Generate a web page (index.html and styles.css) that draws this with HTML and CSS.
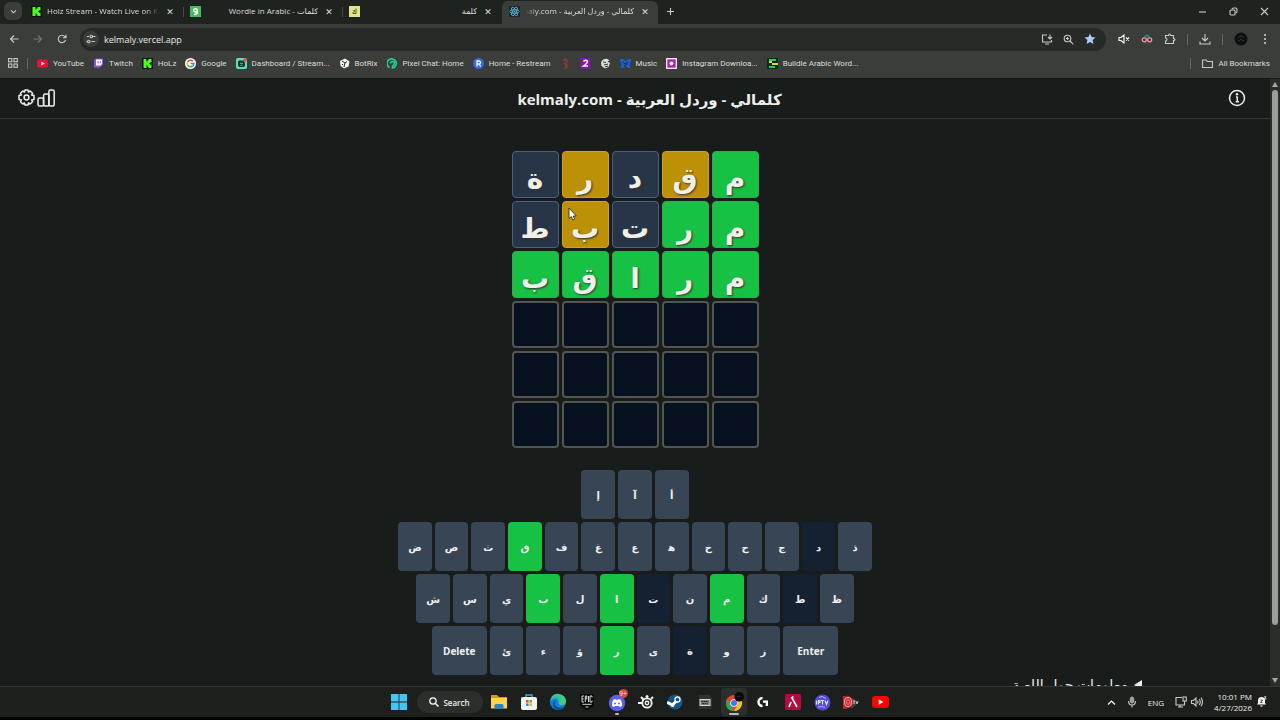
FILE: index.html
```html
<!DOCTYPE html>
<html lang="ar">
<head>
<meta charset="utf-8">
<title>كلمالي - وردل العربية</title>
<link rel="stylesheet" href="styles.css">
</head>
<body>
<header class="browser">
  <div class="tabstrip">
    <button class="tab-search" aria-label="Search tabs"><svg width="9" height="9" viewBox="0 0 9 9"><path class="line" d="M2 3.3l2.500 2.500L7 3.300"/></svg></button>
    <div class="tab"><svg class="fav" viewBox="0 0 11 11"><rect width="11" height="11" rx="1" fill="#08140a"/><path fill="#4dff1e" d="M1.500 1h3v2.500h1V2.300h1V1H9.500v3H8.300v1H7.300v1h1v1h1.200v3H6.500V8.800h-1V7.500h-1V10h-3z"/></svg><span class="tab-title fade">Holz Stream - Watch Live on Kick</span><button class="close" aria-label="Close tab">✕</button></div>
    <div class="tab"><svg class="fav" viewBox="0 0 11 11"><rect width="11" height="11" fill="#45bd5c"/><path d="M7.300 4.300a1.800 1.600 0 1 1-3.600 0 1.800 1.600 0 0 1 3.600 0v2.200Q7.200 8.600 4 8.500" fill="none" stroke="#fff" stroke-width="1.500"/></svg><span class="tab-title" dir="rtl">كلمات - Wordle in Arabic</span><button class="close" aria-label="Close tab">✕</button></div>
    <div class="tab"><svg class="fav" viewBox="0 0 11 11"><rect width="11" height="11" fill="#e3e58d"/><path d="M7 2.500v5H4V6m2-2L4.500 5 6 6" fill="none" stroke="#5b5a30"/></svg><span class="tab-title" dir="rtl">كلمة</span><button class="close" aria-label="Close tab">✕</button></div>
    <div class="tab active"><svg class="fav" viewBox="0 0 11 11"><rect width="11" height="11" rx="1" fill="#18272d"/><g fill="none" stroke="#58bcd8" stroke-width=".8"><ellipse cx="5.500" cy="5.500" rx="4.800" ry="1.900"/><ellipse cx="5.500" cy="5.500" rx="4.800" ry="1.900" transform="rotate(60 5.500 5.500)"/><ellipse cx="5.500" cy="5.500" rx="4.800" ry="1.900" transform="rotate(120 5.500 5.500)"/></g><circle cx="5.500" cy="5.500" r="1" fill="#58bcd8"/></svg><span class="tab-title fade-left" dir="rtl">كلمالي - وردل العربية - kelmaly.com</span><button class="close" aria-label="Close tab">✕</button></div>
    <button class="new-tab" aria-label="New tab"><svg width="9" height="9" viewBox="0 0 9 9"><path class="line" d="M4.500 1v7M1 4.500h7"/></svg></button>
    <div class="window-buttons">
      <button aria-label="Minimize"><svg width="9" height="9" viewBox="0 0 9 9"><path class="line" d="M1 5h7"/></svg></button>
      <button aria-label="Restore"><svg width="9" height="9" viewBox="0 0 9 9"><rect class="line" x="1" y="3" width="5" height="5" rx="1"/><path class="line" d="M3 2.500Q3 1 4.500 1H6.500Q8 1 8 2.500V4.500Q8 6 6.500 6"/></svg></button>
      <button aria-label="Close"><svg width="9" height="9" viewBox="0 0 9 9"><path class="line" d="M1 1l7 7M8 1L1 8"/></svg></button>
    </div>
  </div>
  <div class="toolbar">
    <div class="nav-buttons">
      <button aria-label="Back"><svg width="10" height="10" viewBox="0 0 10 10"><path class="line" d="M9.500 5H1.500M5 1.500L1.500 5 5 8.500"/></svg></button>
      <button class="dim" aria-label="Forward"><svg width="10" height="10" viewBox="0 0 10 10"><path class="line" d="M.5 5h8M5 1.500L8.500 5 5 8.500"/></svg></button>
      <button aria-label="Reload"><svg width="10" height="10" viewBox="0 0 10 10"><path class="line" d="M8.500 6A3.700 3.700 0 1 1 7.800 2.600L9 3.800M9 .8v3H6"/></svg></button>
    </div>
    <div class="address">
      <span class="site-info"><svg width="10" height="10" viewBox="0 0 10 10"><path class="line" d="M1 2.500h2M5.500 7.500H9M7 2.500H9.500M.5 7.500h1"/><circle class="line" cx="2.800" cy="7.500" r="1.300"/><circle class="line" cx="5.300" cy="2.500" r="1.300"/></svg></span>
      <input type="text" value="kelmaly.vercel.app" aria-label="Address">
      <button aria-label="Install"><svg width="12" height="11" viewBox="0 0 12 11"><path class="line" d="M6 1H1.500v7h9V6M4 10h4M9 .5v4M7 3l2 2 2-2"/></svg></button>
      <button aria-label="Zoom"><svg width="11" height="11" viewBox="0 0 11 11"><circle class="line" cx="4.500" cy="4.500" r="3.300"/><path class="line" d="M7 7l3.300 3.300M3 4.500h3M4.500 3v3"/></svg></button>
      <button aria-label="Bookmark"><svg width="12" height="12" viewBox="0 0 12 12"><path fill="#a8cdfb" d="M6 .5l1.600 3.600 3.900.4-2.900 2.600.8 3.900L6 9l-3.400 2 .8-3.900L.5 4.500l3.900-.4z"/></svg></button>
    </div>
    <div class="extensions">
      <button aria-label="Muted"><svg width="12" height="10" viewBox="0 0 12 10"><path class="line bright" d="M1 3.500v3h2L6 9V1L3 3.500zM8 3.500l3 3M11 3.500l-3 3"/></svg></button>
      <button aria-label="Incognito helper"><svg width="12" height="11" viewBox="0 0 12 11"><path fill="#2d7774" d="M3 3.500Q3 0 6 .5 9 0 9 3.500z"/><path fill="#444" d="M3 8h6l-1 2.500H4z"/><circle cx="3.300" cy="5.800" r="2" fill="#333" stroke="#ef9aa7" stroke-width="1.300"/><circle cx="8.700" cy="5.800" r="2" fill="#333" stroke="#ef9aa7" stroke-width="1.300"/></svg></button>
      <button aria-label="Extensions"><svg width="12" height="12" viewBox="0 0 12 12"><path class="line" d="M1.500 2.500H4.500Q4.500 1 5.500 1T6.500 2.500H9.500V5.500Q11 5.500 11 6.500T9.500 7.500V10.500H1.500V8Q3 8 3 6.500T1.500 5z"/></svg></button>
      <i class="sep"></i>
      <button aria-label="Downloads"><svg width="12" height="12" viewBox="0 0 12 12"><path class="line" d="M6 1v6.500M3 5l3 3 3-3M1 8.500V11h10V8.500"/></svg></button>
      <i class="sep"></i>
      <button aria-label="Profile"><svg width="14" height="14" viewBox="0 0 14 14"><circle cx="7" cy="7" r="6.500" fill="#0e100f"/><path d="M4 6q3-4 6 0M4 9q3-3 6 0" stroke="#343735" fill="none"/></svg></button>
      <button aria-label="Menu"><svg width="12" height="12" viewBox="0 0 12 12" fill="#d5d7d4"><circle cx="6" cy="2" r="1"/><circle cx="6" cy="6" r="1"/><circle cx="6" cy="10" r="1"/></svg></button>
    </div>
  </div>
  <nav class="bookmarks" aria-label="Bookmarks">
    <button aria-label="Apps"><svg width="10" height="10" viewBox="0 0 10 10"><g class="line"><rect x=".5" y=".5" width="3.300" height="3.300"/><rect x="6" y=".5" width="3.300" height="3.300"/><rect x=".5" y="6" width="3.300" height="3.300"/><rect x="6" y="6" width="3.300" height="3.300"/></g></svg></button>
    <i class="sep"></i>
    <a href="#"><svg viewBox="0 0 11 11"><rect y="1.500" width="11" height="8" rx="2" fill="#f20d32"/><path fill="#fff" d="M4.300 3.500v4l3.500-2z"/></svg>YouTube</a>
    <a href="#"><svg viewBox="0 0 11 11"><path fill="#8c4de8" d="M1 2.500L2.500.5H10v6L7 9.500H5.500L4 11V9.500H1z"/><path fill="#fff" d="M3 1.500h6V6L7.500 7.500H3z"/><path stroke="#8c4de8" d="M5 3v2.500M7.300 3v2.500"/></svg>Twitch</a>
    <a href="#"><svg viewBox="0 0 11 11"><rect width="11" height="11" rx="1" fill="#08140a"/><path fill="#4dff1e" d="M1.500 1h3v2.500h1V2.300h1V1H9.500v3H8.300v1H7.300v1h1v1h1.200v3H6.500V8.800h-1V7.500h-1V10h-3z"/></svg>HoLz</a>
    <a href="#"><svg viewBox="0 0 11 11"><circle cx="5.500" cy="5.500" r="5.500" fill="#fff"/><g fill="none" stroke-width="1.500"><path stroke="#e94335" d="M2.600 3.800A3.400 3.400 0 0 1 7.900 3.100"/><path stroke="#fbbc05" d="M2.600 3.800a3.400 3.400 0 0 0 0 3.400"/><path stroke="#34a853" d="M2.600 7.200a3.400 3.400 0 0 0 5.300.7"/><path stroke="#4285f4" d="M7.900 7.900A3.400 3.400 0 0 0 8.900 5.500H5.500"/></g></svg>Google</a>
    <a href="#"><svg viewBox="0 0 11 11"><rect width="11" height="11" rx="2" fill="#57e3b5"/><path fill="#0b2c25" d="M2 4q0-1.500 1.500-1.500H7L9 4.500V7q0 2-2 2H4Q2 9 2 7z"/><path fill="none" stroke="#57e3b5" d="M4 5q1.500 1 3 0M4.500 7.300h2"/><circle cx="9" cy="2" r="1.700" fill="#e8463d"/></svg>Dashboard / Stream...</a>
    <a href="#"><svg viewBox="0 0 11 11"><path fill="#f3f4f2" d="M1 3l5-2.500 4.500 3-1 5L5 10.500 1.500 8z"/><path stroke="#222" fill="none" d="M3 3l3 2 2-1.500M6 5l-1 4M3 6l1 1"/></svg>BotRix</a>
    <a href="#"><svg viewBox="0 0 11 11"><path fill="none" stroke="#20cf95" stroke-width="1.600" d="M2.500 9.500A4.600 4.600 0 1 1 5.500 10V7.500M5.500 7.500a2 2 0 1 0-2-2"/></svg>Pixel Chat: Home</a>
    <a href="#"><svg viewBox="0 0 11 11"><circle cx="5.500" cy="5.500" r="5.500" fill="#2f6bea"/><path fill="none" stroke="#fff" stroke-width="1.300" d="M4 8.500V3h2q1.500.1 1.500 1.600T6 6H4m2 0l1.700 2.500"/></svg>Home - Restream</a>
    <a href="#" aria-label="Bookmark"><svg viewBox="0 0 11 11"><path fill="none" stroke="#74482f" stroke-width="1.500" d="M3.500 2.500Q6-.5 7.500 2.500 8 5 5 5.500 8 7 6.500 10H4"/><path stroke="#b43b2e" d="M4 3h2M5 7.500h2"/></svg></a>
    <a href="#" aria-label="Bookmark"><svg viewBox="0 0 11 11"><rect x=".5" width="10" height="11" fill="#8119a8"/><path fill="none" stroke="#fff" stroke-width="1.500" d="M3.500 3.500Q5.500 1 7.500 3.200 7.500 5 3.500 8H8"/></svg></a>
    <a href="#" aria-label="Bookmark"><svg viewBox="0 0 11 11"><path fill="#dcdedb" d="M1 4.500Q3 0 7.500 1l2 1.500-2 1L10 5 8.500 9 5 10.500 1.500 8z"/><path fill="none" stroke="#333" d="M3 4l3 .5M4 7l4-1M5 9l3-1"/></svg></a>
    <a href="#"><svg viewBox="0 0 11 11"><path fill="#235cc0" d="M0 1h3l2.500 2L8 1h3v3L9.500 5.500 10.500 10H8L5.500 8 3 10H.5l1-4.500L0 4z"/><path stroke="#0e2860" d="M3 4l2 2 3-2M4 8l3-2" fill="none"/></svg>Music</a>
    <a href="#"><svg viewBox="0 0 11 11"><rect x=".7" y=".7" width="9.600" height="9.600" fill="#b11cb6" stroke="#fff" stroke-width="1.200"/><circle cx="5.500" cy="5.500" r="2" fill="#fff"/></svg>Instagram Downloa...</a>
    <a href="#"><svg viewBox="0 0 11 11"><rect width="11" height="11" fill="#0b2c20"/><path stroke="#2fc866" stroke-width="1.800" d="M2 2h7M2 9h6"/><path stroke="#dbd348" stroke-width="1.800" d="M5 6h6M2 4h3"/></svg>Buildle Arabic Word...</a>
    <div class="all-bookmarks"><i class="sep"></i><a href="#"><svg viewBox="0 0 11 11"><path class="line" d="M.5 2h3.700l1 1.500h5.300v6H.5z"/></svg>All Bookmarks</a></div>
  </nav>
</header>

<div class="viewport">
  <div class="page">
    <header class="game-header">
      <div class="header-icons">
        <button aria-label="Settings"><svg width="17" height="17" viewBox="0 0 17 17"><path class="icon" d="M7 1h3l.5 2 1.700-1L14.600 4.200l-1 1.800 2.400.6v3.800l-2.400.6 1 1.800-2.400 2.200-1.700-1-.5 2H7l-.5-2-1.700 1-2.400-2.200 1-1.800L1 10.400V6.600L3.400 6l-1-1.800L4.800 2l1.700 1z"/><circle class="icon" cx="8.500" cy="8.500" r="2.400"/></svg></button>
        <button aria-label="Statistics"><svg width="18" height="18" viewBox="0 0 18 18"><rect class="icon" x="1" y="9" width="5.600" height="8" rx="1.500"/><rect class="icon" x="6.600" y="5" width="5.300" height="12" rx="1.500"/><rect class="icon" x="11.900" y="1" width="5.300" height="16" rx="1.500"/></svg></button>
      </div>
      <h1 dir="rtl">كلمالي - وردل العربية - kelmaly.com</h1>
      <button aria-label="Information"><svg width="18" height="18" viewBox="0 0 18 18"><circle class="icon" cx="9" cy="9" r="7.500"/><path class="icon" d="M8 8h1.300v4.500M7.600 12.700H11"/><circle cx="9" cy="5.300" r="1.200" fill="#eee"/></svg></button>
    </header>
    <main class="game">
      <div class="board" dir="rtl">
        <div class="tile right">م</div><div class="tile near">ق</div><div class="tile miss">د</div><div class="tile near">ر</div><div class="tile miss">ة</div>
        <div class="tile right">م</div><div class="tile right">ر</div><div class="tile miss">ت</div><div class="tile near">ب<svg class="cursor" viewBox="0 0 9 14"><path d="M1 1v10.500l2.300-2 1.500 3.500 1.800-.8L5.200 9H8.300z" fill="#fff" stroke="#222" stroke-width=".8"/></svg></div><div class="tile miss">ط</div>
        <div class="tile right">م</div><div class="tile right">ر</div><div class="tile right">ا</div><div class="tile right">ق</div><div class="tile right">ب</div>
        <div class="tile"></div><div class="tile"></div><div class="tile"></div><div class="tile"></div><div class="tile"></div>
        <div class="tile"></div><div class="tile"></div><div class="tile"></div><div class="tile"></div><div class="tile"></div>
        <div class="tile"></div><div class="tile"></div><div class="tile"></div><div class="tile"></div><div class="tile"></div>
      </div>
      <div class="keyboard">
        <div class="keys" dir="rtl"><button class="key">أ</button><button class="key">آ</button><button class="key">إ</button></div>
        <div class="keys" dir="rtl"><button class="key">ذ</button><button class="key used">د</button><button class="key">ج</button><button class="key">ح</button><button class="key">خ</button><button class="key">ه&zwj;</button><button class="key">ع</button><button class="key">غ</button><button class="key">ف</button><button class="key hit">ق</button><button class="key">ث</button><button class="key">ص</button><button class="key">ض</button></div>
        <div class="keys" dir="rtl"><button class="key">ظ</button><button class="key used">ط</button><button class="key">ك</button><button class="key hit">م</button><button class="key">ن</button><button class="key used">ت</button><button class="key hit">ا</button><button class="key">ل</button><button class="key hit">ب</button><button class="key">ي</button><button class="key">س</button><button class="key">ش</button></div>
        <div class="keys" dir="rtl"><button class="key wide">Enter</button><button class="key">ز</button><button class="key">و</button><button class="key used">ة</button><button class="key">ى</button><button class="key hit">ر</button><button class="key">ؤ</button><button class="key">ء</button><button class="key">ئ</button><button class="key wide">Delete</button></div>
      </div>
      <details class="about" dir="rtl"><summary>معلومات حول اللعبة</summary></details>
    </main>
  </div>
  <div class="scrollbar" aria-hidden="true">
    <svg width="6" height="5" viewBox="0 0 6 5"><path fill="#a5a8a5" d="M3 0l3 5H0z"/></svg>
    <div class="thumb"></div>
    <svg width="6" height="5" viewBox="0 0 6 5"><path fill="#a5a8a5" d="M3 5l3-5H0z"/></svg>
  </div>
</div>

<footer class="taskbar">
  <div class="dock">
    <button class="start" aria-label="Start"><svg width="16" height="16" viewBox="0 0 16 16"><path fill="#45c4f4" d="M0 0h7.600v7.600H0zM8.400 0H16v7.600H8.400zM0 8.400h7.600V16H0zM8.400 8.400H16V16H8.400z"/></svg></button>
    <button class="search"><svg width="10" height="10" viewBox="0 0 10 10"><circle cx="4" cy="4" r="3.200" fill="none" stroke="#fff" stroke-width="1.200"/><path stroke="#fff" stroke-width="1.400" d="M6.400 6.400L9.500 9.500"/></svg>Search</button>
    <div class="apps">
      <button aria-label="File Explorer"><svg width="18" height="16" viewBox="0 0 18 16"><path fill="#d59a1b" d="M1 1h6l2 2h8v6H1z"/><path fill="#fcd549" d="M1 4h16v10.500H1z"/><path fill="#2584c6" d="M4.500 15v-3.500q0-1.500 1.500-1.500h6q1.500 0 1.500 1.500V15z"/></svg></button>
      <button aria-label="Store"><svg width="18" height="18" viewBox="0 0 18 18"><path fill="none" stroke="#3bacd9" stroke-width="1.400" d="M6 5V2h6v3"/><rect x="1" y="4" width="16" height="13" rx="2" fill="#f1f3f2"/><path fill="#e65032" d="M6 7h2.600v2.600H6z"/><path fill="#6fb52c" d="M9.400 7H12v2.600H9.400z"/><path fill="#1c96d8" d="M6 10.400h2.600V13H6z"/><path fill="#efb41c" d="M9.400 10.400H12V13H9.400z"/></svg></button>
      <button aria-label="Edge"><svg width="18" height="18" viewBox="0 0 18 18"><circle cx="9" cy="9" r="8" fill="#1684d2"/><path fill="#43cc75" d="M2 5Q5 0 10 1q7 1 7 8-1 4-6 3-2-1-1-3Q9 4 2 5z"/><path fill="#26b8d8" d="M1 8Q3 2 9 3.500q3 1 3 4Q7 3 1 8z"/><path fill="#0c4a9c" d="M7 7q-3 4 1 7 4 2 7-1-2 4-6.500 4Q4 16 4 11q0-3 3-4z"/></svg></button>
      <button aria-label="Epic Games"><svg width="16" height="18" viewBox="0 0 16 18"><path fill="#080909" d="M1 1h14v12l-7 4-7-4z"/><path fill="none" stroke="#eee" stroke-width=".9" d="M5 3H3v6h2M3 6h1.700M6.300 9V3h1.500v3H6.300M9.500 3v6M13 4.500V3h-2v6h2V7.500M3.500 11.300h9M6.500 14h3"/></svg></button>
      <button class="running" aria-label="Discord"><svg width="20" height="20" viewBox="0 0 20 20"><circle cx="10" cy="11" r="8.200" fill="#5962e8"/><path fill="#fff" d="M5 14q-.5-4 1.500-6.500l2-.5.4.8h2.200l.4-.8 2 .5Q15.500 10 15 14l-2 1-1-1H8l-1 1z"/><circle cx="8" cy="11.500" r="1" fill="#5962e8"/><circle cx="12" cy="11.500" r="1" fill="#5962e8"/></svg><span class="badge">9+</span></button>
      <button aria-label="SteelSeries"><svg width="16" height="16" viewBox="0 0 16 16"><circle cx="9" cy="9" r="4.700" fill="none" stroke="#f2f3f2" stroke-width="1.800"/><circle cx="9" cy="9" r="1.700" fill="none" stroke="#f2f3f2" stroke-width="1.400"/><path stroke="#f2f3f2" stroke-width="2" d="M0 9h4M3 3l3 3M13 5l2-2"/><circle cx="9" cy="2.500" r="1.500" fill="#f2f3f2"/></svg></button>
      <button aria-label="Steam"><svg width="16" height="16" viewBox="0 0 16 16"><circle cx="8" cy="8" r="7.500" fill="#14558a"/><path stroke="#fff" stroke-width="3" d="M0 8.500l5.500 2.200L9.500 7"/><circle cx="10.500" cy="5.500" r="2.500" fill="#14558a" stroke="#fff" stroke-width="1.300"/><circle cx="5.500" cy="11" r="2" fill="#fff"/></svg></button>
      <button aria-label="On-screen keyboard"><svg width="16" height="14" viewBox="0 0 16 14"><path fill="#303231" d="M2 0h10l3 3v11H2z"/><rect x="3" y="4.500" width="10" height="6" fill="#777" stroke="#d5d7d5"/><path stroke="#222" d="M4.500 6.500h7M5.500 8.500h5" stroke-dasharray="1.500 .8"/></svg></button>
      <button class="running current" aria-label="Chrome"><svg width="20" height="20" viewBox="0 0 20 20"><circle cx="10" cy="11" r="8" fill="#eb4132"/><path fill="#32a650" d="M3 7l5 8 2 4Q2 19 2 11q0-2 1-4z"/><path fill="#fbc116" d="M10 19l4-7V8h3.500Q19 11 17.500 14 15 19 10 19z"/><circle cx="10" cy="11" r="3.800" fill="#fff"/><circle cx="10" cy="11" r="3" fill="#3979e8"/><circle cx="15.200" cy="4.800" r="4.800" fill="#080908"/><path stroke="#333" fill="none" d="M13 5q2-2 4 0"/></svg></button>
      <button aria-label="Logitech G HUB"><svg width="14" height="14" viewBox="0 0 14 14"><path fill="none" stroke="#fff" stroke-width="2.400" d="M6.500 3A4 4 0 1 0 6.500 11"/><path fill="#fff" d="M7 5.500h5V11H9.700V7.800H7z"/></svg></button>
      <button aria-label="App"><svg width="16" height="16" viewBox="0 0 16 16"><rect width="16" height="16" rx="1.500" fill="#b40a3e"/><path fill="none" stroke="#fff" stroke-width="1.600" d="M4 13l2-5M6.500 3l5.500 10M7 3h1.500"/></svg></button>
      <button aria-label="IPTV"><svg width="17" height="17" viewBox="0 0 17 17"><circle cx="8.500" cy="8.500" r="8" fill="#5149dc"/><g stroke="#e3e2ff" fill="none"><path d="M2.500 6.500v4M4.500 10.500v-4H6v2H4.500M7 6.500h3M8.500 6.500v4M11 6.500l1.500 4 1.500-4" stroke-width="1.200"/><path d="M5 3.500l3-1 4 2M4 13l4-.5 3 1" stroke-width=".7"/></g></svg></button>
      <button aria-label="Recorder"><svg width="18" height="16" viewBox="0 0 18 16"><path fill="#454746" d="M5 1l12 7-8 7z"/><path fill="#c92432" d="M1 2q10-1 10 6T1 15z"/><ellipse cx="6" cy="8" rx="3.500" ry="4.500" fill="none" stroke="#f5aaa8"/><ellipse cx="6" cy="8" rx="1.500" ry="2.500" fill="none" stroke="#f5aaa8" stroke-width=".7"/><path stroke="#ddd" stroke-width=".8" d="M11 7h2M12 7v3M14 7l1 3 1-3"/></svg></button>
      <button aria-label="YouTube"><svg width="17" height="12" viewBox="0 0 17 12"><rect width="17" height="12" rx="3" fill="#fa0305"/><path fill="#fff" d="M6.700 3.300v5.400L11.300 6z"/></svg></button>
    </div>
  </div>
  <div class="tray">
    <button aria-label="Hidden icons"><svg width="9" height="9" viewBox="0 0 9 9"><path class="line bright" d="M1 6.500L4.500 3 8 6.500"/></svg></button>
    <button aria-label="Microphone"><svg width="10" height="12" viewBox="0 0 10 12"><rect x="3.300" y="1" width="3.400" height="6" rx="1.700" fill="#999b99" stroke="#c7c9c7" stroke-width=".8"/><path class="line" d="M1.500 5Q1.500 9 5 9T8.500 5M5 9v2.500"/></svg></button>
    <span>ENG</span>
    <button aria-label="Network and volume" class="quick"><svg width="12" height="12" viewBox="0 0 12 12"><path class="line" d="M7 1.500H1v7.500h8.500V6M3 11h5M5 9v2M9.500 5v3"/><rect class="line" x="8" y="1" width="3.300" height="4"/></svg><svg width="12" height="12" viewBox="0 0 12 12"><path class="line" d="M.5 4.500v3H2.500L5 10V2L2.500 4.500zM6.500 4.500q1 1.500 0 3M8.300 3q2 3 0 6M10 1.800q3 4.200 0 8.400"/></svg></button>
    <time>10:01 PM<br>4/27/2026</time>
    <button aria-label="Notifications"><svg width="11" height="12" viewBox="0 0 11 12"><path fill="#f3f4f3" d="M1 8.500L2 7V4Q2.500 1 5.500 1T9 4v3l1 1.500zM4 9.500h3Q5.500 12 4 9.500z"/><path fill="none" stroke="#222" stroke-width=".8" d="M4.500 4h2l-2 2.500h2"/><path fill="none" stroke="#fff" stroke-width=".8" d="M8 .8h2L8.500 3h2"/></svg></button>
  </div>
</footer>
</body>
</html>
```
FILE: styles.css
```css
* { box-sizing: border-box; }
body {
  margin: 0;
  height: 100vh;
  display: flex;
  flex-direction: column;
  overflow: hidden;
  background: #181c1a;
  color: #eeefec;
  font-family: "Open Sans", "DejaVu Sans", sans-serif;
}
button {
  display: inline-flex;
  align-items: center;
  justify-content: center;
  margin: 0;
  padding: 0;
  border: 0;
  background: none;
  color: inherit;
  font: inherit;
}
svg { display: block; flex: none; }
a { color: inherit; text-decoration: none; }
.line { fill: none; stroke: #c9cbc8; stroke-width: 1.1; }
.bright { stroke: #fff; }
.icon { fill: none; stroke: #eeeeec; stroke-width: 1.5; stroke-linejoin: round; }
.sep { width: 1px; height: 11px; background: #646663; }

/* Browser frame */
.browser { flex: none; background: #3b3d3a; border-bottom: 1px solid #151716; font-size: 8px; color: #dcdedb; }
.tabstrip { display: flex; align-items: center; height: 24px; background: #1f2320; }
.tab-search { width: 18px; height: 18px; margin: 0 2px 2px 4px; border-radius: 6px; background: #3a3d3a; }
.tab {
  display: flex;
  align-items: center;
  gap: 5px;
  width: 159px;
  height: 24px;
  padding: 0 7px 2px;
}
.tab + .tab:not(.active) { background: linear-gradient(#464946, #464946) left center / 1px 10px no-repeat; }
.tab.active { width: 156px; height: 23px; margin: 1px 0 0 1px; padding-bottom: 3px; border-radius: 6px 6px 0 0; background: #3b3d3a; }
.fav { width: 11px; height: 11px; }
.tab-title { flex: 1; min-width: 0; overflow: hidden; white-space: nowrap; line-height: 12px; }
.fade { mask-image: linear-gradient(to right, #000 88%, transparent); }
.fade-left { mask-image: linear-gradient(to left, #000 88%, transparent); }
.close { width: 12px; height: 12px; font-size: 9px; }
.new-tab { width: 18px; height: 18px; margin: 0 0 2px 3px; }
.window-buttons { display: flex; gap: 22px; margin-left: auto; padding: 0 11px 2px 0; }
.toolbar { display: flex; align-items: center; height: 30px; padding: 0 9px 0 8px; gap: 8px; }
.nav-buttons { display: flex; gap: 12px; }
.nav-buttons button { width: 12px; height: 20px; }
.dim { opacity: .4; }
.address { flex: 1; display: flex; align-items: center; gap: 10px; height: 23px; margin-left: 4px; padding: 0 10px 0 3px; border-radius: 12px; background: #282a27; }
.site-info { display: grid; place-items: center; width: 16px; height: 16px; border-radius: 50%; background: #3a3c39; }
.address input { flex: 1; min-width: 0; margin-left: -5px; padding: 0; border: 0; outline: 0; background: none; color: #e8e9e7; font: 9px "Open Sans", sans-serif; }
.extensions { display: flex; align-items: center; gap: 11px; padding-left: 6px; }
.extensions button:first-child { margin-left: -2px; }
.bookmarks { display: flex; align-items: center; gap: 9px; height: 24px; padding: 0 10px 6px 8px; font-family: Roboto, "DejaVu Sans", sans-serif; }
.bookmarks a { display: flex; align-items: center; gap: 5px; white-space: nowrap; }
.bookmarks a svg { width: 11px; height: 11px; }
.all-bookmarks { display: flex; align-items: center; gap: 11px; margin-left: auto; }

/* Game page */
.viewport { flex: 1; min-height: 0; display: flex; }
.page { flex: 1; min-width: 0; overflow: hidden; }
.game-header { display: flex; align-items: center; height: 40px; padding: 0 24px 2px 18px; border-bottom: 1px solid #343836; }
.header-icons { display: flex; align-items: center; gap: 2px; }
h1 { flex: 1; margin: 0; padding: 2px 0 0 16px; font-size: 15px; line-height: 24px; text-align: center; }
.game { display: flex; flex-direction: column; align-items: center; padding-top: 32px; }
.board { display: grid; grid-template-columns: repeat(5, 47px); grid-auto-rows: 47px; gap: 3px; }
.tile {
  position: relative;
  display: flex;
  align-items: center;
  justify-content: center;
  padding-top: 4px;
  border: 2px solid #53554f;
  border-radius: 4px;
  background: #06101f;
  color: #f0f0e6;
  font-size: 28px;
  font-weight: 700;
  line-height: 40px;
  text-shadow: 1px 1px 2px #333;
}
.tile.miss { border: 1px solid #4c6080; background: #283548; }
.tile.near { border: 1px solid #cba12a; background: #bd9106; }
.tile.right { border: 1px solid #35a853; background: #16c143; }
.cursor { position: absolute; left: 5px; top: 5px; width: 9px; height: 14px; }
.keyboard { width: 474px; max-width: 100%; display: grid; gap: 3px; margin-top: 22px; }
.keys { display: flex; justify-content: center; gap: 3px; }
.key {
  flex: none;
  width: calc((100% - 36px) / 13);
  height: 49px;
  border-radius: 4px;
  background: #384555;
  color: #f0f1ee;
  font-size: 10px;
  font-weight: 700;
}
.key.wide { width: 55px; }
.key.used { background: #152130; }
.key.hit { background: #16c143; }
.about { align-self: stretch; margin-right: 128px; font-size: 14px; line-height: 20px; }
.about summary { list-style: none; }
.about summary::before {
  content: "";
  display: inline-block;
  margin-left: 6px;
  border: solid transparent;
  border-width: 5px 8px 5px 0;
  border-right-color: #eeefec;
  vertical-align: 0;
}
.scrollbar { display: flex; flex-direction: column; align-items: center; gap: 3px; width: 10px; padding: 3px 0; background: #2b2d2b; }
.thumb { width: 6px; height: 89%; border-radius: 3px; background: #9b9e9b; }
.scrollbar svg:last-child { margin-top: auto; }

/* Taskbar */
.taskbar {
  display: grid;
  grid-template-columns: 1fr auto 1fr;
  align-items: center;
  height: 34px;
  border-top: 1px solid #343735;
  border-bottom: 3px solid #000;
  background: #1c1f1c;
  font-size: 8px;
}
.dock { grid-column: 2; display: flex; align-items: center; }
.start { width: 29px; height: 28px; }
.search { gap: 4px; width: 66px; height: 22px; margin: 0 2px 0 3px; border-radius: 11px; background: #2c2e2c; font-size: 8px; font-weight: 600; }
.apps { display: grid; grid-template-columns: repeat(14, 1fr); justify-items: center; width: 411px; }
.apps button { position: relative; width: 26px; height: 28px; border-radius: 4px; }
.apps .current { background: #2c2f2c; }
.running::after { content: ""; position: absolute; bottom: 1px; width: 4px; height: 2px; border-radius: 1px; background: #bbb; }
.current::after { width: 10px; }
.badge { position: absolute; top: 1px; right: 2px; width: 9px; height: 9px; border-radius: 50%; background: #d9404c; font-size: 7px; line-height: 9px; }
.tray { display: flex; align-items: center; justify-content: flex-end; gap: 11px; padding-right: 13px; }
.quick { gap: 4px; }
.tray time { line-height: 11px; text-align: right; }
.tray time + button { margin-left: -7px; }
```
